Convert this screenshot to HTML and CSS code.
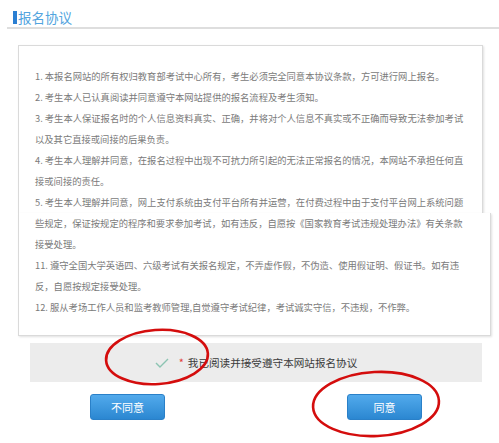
FILE: index.html
```html
<!DOCTYPE html>
<html lang="zh-CN">
<head>
<meta charset="utf-8">
<title>报名协议</title>
<link rel="stylesheet" href="styles.css">
</head>
<body>
<div class="page">
  <div class="head"><span class="bar"></span><span class="title">报名协议</span></div>

  <div class="agreement">
    <div class="part part-top">
      <span class="ln">1. 本报名网站的所有权归教育部考试中心所有，考生必须完全同意本协议条款，方可进行网上报名。</span>
      <span class="ln">2. 考生本人已认真阅读并同意遵守本网站提供的报名流程及考生须知。</span>
      <span class="ln">3. 考生本人保证报名时的个人信息资料真实、正确，并将对个人信息不真实或不正确而导致无法参加考试</span>
      <span class="ln">以及其它直接或间接的后果负责。</span>
      <span class="ln">4. 考生本人理解并同意，在报名过程中出现不可抗力所引起的无法正常报名的情况，本网站不承担任何直</span>
      <span class="ln">接或间接的责任。</span>
      <span class="ln">5. 考生本人理解并同意，网上支付系统由支付平台所有并运营，在付费过程中由于支付平台网上系统问题</span>
    </div>
    <div class="part part-bottom">
      <span class="ln">些规定，保证按规定的程序和要求参加考试，如有违反，自愿按《国家教育考试违规处理办法》有关条款</span>
      <span class="ln">接受处理。</span>
      <span class="ln">11. 遵守全国大学英语四、六级考试有关报名规定，不弄虚作假，不伪造、使用假证明、假证书。如有违</span>
      <span class="ln">反，自愿按规定接受处理。</span>
      <span class="ln">12. 服从考场工作人员和监考教师管理,自觉遵守考试纪律，考试诚实守信，不违规，不作弊。</span>
    </div>
  </div>

  <div class="confirm">
    <svg class="check" width="14" height="10" viewBox="0 0 14 10"><path d="M1 5 L5 9 L13 1" fill="none" stroke="#8cc4b2" stroke-width="1.4"/></svg>
    <span class="star">*</span>
    <span class="confirm-text">我已阅读并接受遵守本网站报名协议</span>
  </div>

  <div class="actions">
    <button class="btn">不同意</button>
    <button class="btn">同意</button>
  </div>

  <svg class="marks" width="499" height="443" viewBox="0 0 499 443">
    <ellipse cx="157" cy="357" rx="51" ry="27" transform="rotate(-4 157 357)" fill="none" stroke="#d40d0d" stroke-width="2.6"/>
    <ellipse cx="376" cy="404" rx="63" ry="32" transform="rotate(-3 376 404)" fill="none" stroke="#d40d0d" stroke-width="2.6"/>
  </svg>
</div>
</body>
</html>
```

FILE: styles.css
```css
html, body {
  margin: 0;
  padding: 0;
  background: #fff;
}

.page {
  position: relative;
  width: 499px;
  height: 443px;
  overflow: hidden;
  font-family: "Noto Sans CJK SC", "Noto Sans", sans-serif;
}

.head {
  margin-left: 7px;
  height: 20px;
  padding-top: 7px;
  padding-left: 6px;
  display: flex;
  align-items: center;
  border-bottom: 2px solid #dedede;
}

.bar {
  display: block;
  width: 4px;
  height: 13px;
  background: #2b7fd2;
  margin-right: 1px;
}

.title {
  font-size: 13.5px;
  line-height: 16px;
  color: #52a4de;
}

.agreement {
  margin: 16px 0 0 18px;
}

.part {
  display: flex;
  flex-direction: column;
  background: #fff;
  border: 1px solid #dadada;
  box-shadow: 1px 1px 2px rgba(0, 0, 0, 0.12);
  padding-left: 16px;
  font-size: 9.3px;
  line-height: 21px;
  color: #7a7a7a;
}

.part-top {
  width: 447px;
  padding-top: 20px;
  border-bottom: none;
}

.part-bottom {
  width: 455px;
  padding-bottom: 17px;
  border-top: none;
}

.ln {
  display: block;
  white-space: nowrap;
}

.confirm {
  margin: 7px 0 0 30px;
  width: 452px;
  height: 39px;
  background: #ececec;
  display: flex;
  align-items: center;
  justify-content: center;
}

.check {
  display: block;
  margin-right: 10px;
}

.star {
  color: #e23a3a;
  font-size: 11px;
  margin-right: 4px;
  line-height: 1;
}

.confirm-text {
  font-size: 10.6px;
  color: #3a3a3a;
}

.actions {
  margin-top: 12px;
  padding-left: 90px;
  display: flex;
  gap: 182px;
}

.btn {
  width: 75px;
  height: 26px;
  border: 1px solid #2a80c8;
  border-radius: 3px;
  background: linear-gradient(#52aaec, #2b87d1);
  color: #fff;
  font-family: "Noto Sans CJK SC", "Noto Sans", sans-serif;
  font-size: 11px;
  padding: 0;
}

.marks {
  position: absolute;
  left: 0;
  top: 0;
  pointer-events: none;
}
```
